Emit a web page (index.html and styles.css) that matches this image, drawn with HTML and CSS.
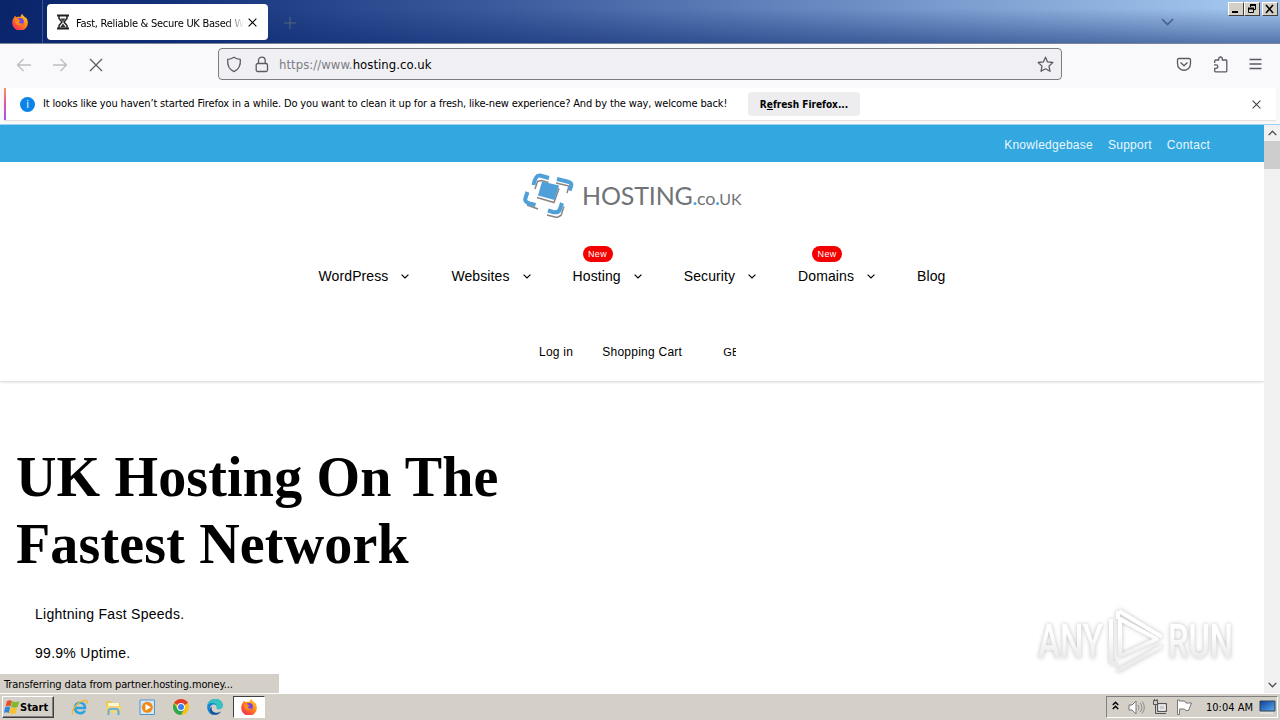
FILE: index.html
```html
<!DOCTYPE html>
<html lang="en">
<head>
  <meta charset="UTF-8" />
  <meta name="viewport" content="width=device-width, initial-scale=1.0"/>
  <title>Fast, Reliable &amp; Secure UK Based Web Hosting</title>
  <link rel="stylesheet" href="styles.css">
</head>
<body>

  <!-- Shared icons -->
  <svg width="0" height="0" class="defs">
    <defs>
      <linearGradient id="fox-body" x1="1" y1="0" x2="0.2" y2="1">
        <stop offset="0" stop-color="#ffe22e"/><stop offset=".45" stop-color="#ff8a16"/><stop offset="1" stop-color="#f5255a"/>
      </linearGradient>
      <linearGradient id="screen" x1="0" y1="0" x2="1" y2="1">
        <stop offset="0" stop-color="#0b3f9c"/><stop offset="1" stop-color="#58aaf0"/>
      </linearGradient>
    </defs>
    <symbol id="firefox" viewBox="0 0 16 16">
      <path d="M2.2 3.2 3 1.8l1.5 1.4C6 2.300 7.500 2.700 8.600 3 8.700 1.800 9.300.7 10.500 0c.3 1.700 2 2.500 3.200 4.200 0-.6-.2-1-.4-1.400 1.600 1.500 2.500 3.500 2.500 5.400A7.800 7.800 0 1 1 .3 8c0-2 .8-3.600 1.900-4.800z" fill="url(#fox-body)"/>
      <circle cx="8.300" cy="7.600" r="3.500" fill="#7543e5"/>
      <path d="M3 5.300c1.500-.8 3-.5 4 .7l1.500.5c-.3 1-1.200 1.200-1.700 1.600.3 1.500 2.500 2 4.200 1-1 2.500-4.700 3-6.700.8C3.300 8.700 3 7 3 5.300z" fill="#ff8b1c"/>
    </symbol>
    <symbol id="chevron" viewBox="0 0 8 5">
      <path d="M.6.600 4 4 7.400.6" fill="none" stroke="currentColor" stroke-width="1.200"/>
    </symbol>
    <symbol id="cross" viewBox="0 0 10 10">
      <path d="M.7.700l8.600 8.600M9.300.700.700 9.300" fill="none" stroke="currentColor" stroke-width="1.200"/>
    </symbol>
  </svg>

  <div class="tab-strip">
    <div class="fx-view"><svg width="16" height="16"><use href="#firefox"/></svg></div>
    <div class="tab">
      <svg width="14" height="16" viewBox="0 0 14 16">
        <path d="M1 1.500h12M1 14.500h12" stroke="#222" stroke-width="2"/>
        <path d="M3 2v2.500L6 8l-3 3.500V14M11 2v2.500L8 8l3 3.500V14" fill="none" stroke="#222" stroke-width="1.500"/>
        <path d="M4.500 4.500h5L7 7.500zM7 9.500l3 4H4z" fill="#333"/>
      </svg>
      <span class="tab-title">Fast, Reliable &amp; Secure UK Based W</span>
      <svg class="tab-close" width="9" height="9"><use href="#cross"/></svg>
    </div>
    <svg class="new-tab" width="12" height="12" viewBox="0 0 12 12"><path d="M6 0v12M0 6h12" stroke="#56657f"/></svg>
    <svg class="all-tabs" width="13" height="8" viewBox="0 0 13 8"><path d="M1 1l5.500 5.500L12 1" fill="none" stroke="#45618f" stroke-width="1.600"/></svg>
    <div class="win-buttons">
      <span class="win-btn"><svg width="12" height="10"><path d="M2 8h6" stroke="#000" stroke-width="2"/></svg></span>
      <span class="win-btn"><svg width="12" height="10"><path d="M4.500 3V1.500h5v4H8M2.500 4.500h5v4h-5z" fill="none" stroke="#000"/><path d="M4 1h6M2 4.500h6" stroke="#000" stroke-width="2"/></svg></span>
      <span class="win-btn close"><svg width="12" height="10"><path d="M2 1l7 8M9 1L2 9" stroke="#000" stroke-width="1.600"/></svg></span>
    </div>
  </div>

  <div class="toolbar">
    <div class="nav-buttons">
      <svg class="off" width="16" height="14" viewBox="0 0 16 14"><path d="M15 7H1.500M7.500 1l-6 6 6 6"/></svg>
      <svg class="off" width="16" height="14" viewBox="0 0 16 14"><path d="M1 7h13.500M8.500 1l6 6-6 6"/></svg>
      <svg class="stop" width="14" height="14" viewBox="0 0 14 14"><path d="M1 1l12 12M13 1L1 13"/></svg>
    </div>
    <div class="url-bar">
      <svg width="16" height="17" viewBox="0 0 16 17"><path d="M8 1.200c2 1.400 4 2 6.300 2.200C14.800 9 13 13.500 8 15.700 3 13.500 1.200 9 1.700 3.400 4 3.200 6 2.600 8 1.200z"/></svg>
      <svg class="lock" width="14" height="17" viewBox="0 0 14 17"><rect x="1.200" y="7.500" width="11.300" height="8" rx="1.500"/><path d="M3.500 7.500V4.500c0-4.400 6.700-4.400 6.700 0v3"/></svg>
      <span class="url"><span class="dim">https://www.</span>hosting.co.uk</span>
      <svg class="star" width="17" height="17" viewBox="0 0 17 17"><path d="M8.500 1.200l2.100 4.700 5.200.6-3.800 3.600 1 5.200-4.500-2.500L4 15.300l1-5.200L1.200 6.500l5.200-.6z"/></svg>
    </div>
    <div class="tools">
      <svg width="16" height="15" viewBox="0 0 16 15"><path d="M3 1.500h10c1 0 1.500.5 1.500 1.500v3.500c0 9-13 9-13 0V3c0-1 .5-1.500 1.500-1.500zM4.500 5.500 8 8.800l3.500-3.300"/></svg>
      <svg width="15" height="17" viewBox="0 0 15 17"><path d="M1.700 7V5c0-.7.300-1 1-1h3V3c0-2.700 3.600-2.700 3.600 0v1H13c.5 0 .8.3.8.800V15c0 .5-.3.800-.8.800H2.500c-.5 0-.8-.3-.8-.8v-2.700H3c2.500 0 2.500-3.500 0-3.500H1"/></svg>
      <svg width="13" height="12" viewBox="0 0 13 12"><path d="M.5 1.500h12M.5 6h12M.5 10.500h12"/></svg>
    </div>
  </div>

  <div class="notice-wrap">
    <div class="notice">
      <span class="info">i</span>
      <span class="notice-text">It looks like you haven’t started Firefox in a while. Do you want to clean it up for a fresh, like-new experience? And by the way, welcome back!</span>
      <button class="refresh"><span>R<u>e</u>fresh Firefox...</span></button>
      <svg class="notice-close" width="9" height="9"><use href="#cross"/></svg>
    </div>
  </div>

  <div class="viewport">
    <div class="page">
      <header>
        <div class="topbar">
          <a>Knowledgebase</a><a>Support</a><a>Contact</a>
        </div>
        <div class="logo">
          <svg width="52" height="46" viewBox="0 0 52 46">
            <g fill="none" stroke="#8a8583" stroke-width="1.500">
              <path d="M12 17l2.500-7.500 4-1 7 2M33 11l13 3-2 7M4 33l11 4M24 43l10 2.500 4-2 3-9"/>
              <path d="M14 25.500l17 5 5-14"/>
            </g>
            <path d="M19 9.500l17 4-4.500 14.500-16.500-4.500z" fill="#4f9fd9"/>
            <g fill="none" stroke="#4f9fd9" stroke-width="4">
              <path d="M10.500 13c1.500-8 3.500-10 6.500-9.500l9 2.500M34 7l10 2.500c4 1 5 2 4 5l-1.500 4M4.500 20l-2 6c-1 3 1 4.500 4 5.500l6 1.500M25 38.500l5 1.500c4 1 6 0 7-3l2-6"/>
            </g>
          </svg>
          <div class="logo-text">HOSTING<span class="small"><i>.</i>co<i>.</i><b>UK</b></span></div>
        </div>
        <nav class="main-nav">
          <a>WordPress<svg width="8" height="5"><use href="#chevron"/></svg></a>
          <a>Websites<svg width="8" height="5"><use href="#chevron"/></svg></a>
          <a><span class="badge">New</span>Hosting<svg width="8" height="5"><use href="#chevron"/></svg></a>
          <a>Security<svg width="8" height="5"><use href="#chevron"/></svg></a>
          <a><span class="badge">New</span>Domains<svg width="8" height="5"><use href="#chevron"/></svg></a>
          <a>Blog</a>
        </nav>
        <div class="account-nav">
          <a>Log in</a><a>Shopping Cart</a><span class="region">GB</span>
        </div>
      </header>

      <section class="hero">
        <h1>UK Hosting On The<br>Fastest Network</h1>
        <p>Lightning Fast Speeds.</p>
        <p>99.9% Uptime.</p>
      </section>
    </div>

    <div class="scrollbar">
      <span class="sb-btn"><svg class="up" width="9" height="6"><use href="#chevron"/></svg></span>
      <span class="thumb"></span>
      <span class="sb-btn end"><svg width="9" height="6"><use href="#chevron"/></svg></span>
    </div>

    <div class="status">Transferring data from partner.hosting.money...</div>

    <svg class="watermark" width="210" height="72" viewBox="0 0 210 72">
      <defs>
        <linearGradient id="fade" gradientUnits="userSpaceOnUse" x1="0" y1="16" x2="0" y2="60">
          <stop offset=".3" stop-color="#fff"/><stop offset=".8" stop-color="#ececec"/>
        </linearGradient>
      </defs>
      <g class="wm-text" fill="url(#fade)">
        <text x="8" y="53" textLength="65" lengthAdjust="spacingAndGlyphs">ANY</text>
        <text x="138" y="53" textLength="65" lengthAdjust="spacingAndGlyphs">RUN</text>
      </g>
      <g fill="none" stroke="url(#fade)" stroke-width="4" stroke-linejoin="round">
        <path d="M90 14v37l37-17z"/>
        <path d="M89 6l43 26M81 14v44M88 14v-8M87 66l45-25M87 58l-6 0"/>
      </g>
    </svg>
  </div>

  <div class="taskbar">
    <div class="start">
      <svg width="16" height="16" viewBox="0 0 16 16">
        <path d="M3 2c2-1 3-1 5 0L6.500 7.500c-2-1-3-1-5 0z" fill="#e8502a"/>
        <path d="M8.500 2.300c2 1 4 1 7 0L13.500 8c-2 1-4 1-6.500 0z" fill="#7fba2c"/>
        <path d="M1.200 8.300c2-1 3-1 5 0L4.800 14c-2-1-3-1-4.800 0z" fill="#2f86dc"/>
        <path d="M6.700 8.600c2 1 4 1 6.500 0l-1.500 5.700c-2 1-4 1-6.500 0z" fill="#fbc02d"/>
      </svg>
      <span>Start</span>
    </div>
    <div class="apps">
      <span class="app">
        <svg width="17" height="17" viewBox="0 0 17 17">
          <path d="M13.800 11.500c-2 4-9.800 3.500-9.800-2.800 0-6.700 10-6.700 10 .3H5" fill="none" stroke="#2ba3e0" stroke-width="2.600"/>
          <path d="M2 15.500C-1 12 8 1 15 1.500c2 .5 1 2.500.5 3.500" fill="none" stroke="#efb92f" stroke-width="1.300"/>
        </svg>
      </span>
      <span class="app">
        <svg width="17" height="17" viewBox="0 0 17 17">
          <path d="M1 2h5l1 2h8v10H1z" fill="#e9c75b"/><path d="M3 4h11v4H3z" fill="#fff6c9"/>
          <path d="M1 7h15v7H1z" fill="#f1d37a"/><path d="M3.500 16v-4c0-3 10-3 10 0v4" fill="none" stroke="#62b1dc" stroke-width="2.200"/>
        </svg>
      </span>
      <span class="app">
        <svg width="17" height="17" viewBox="0 0 17 17">
          <path d="M1 1h14.500v14.500H1z" fill="#d5e8f8" stroke="#4f96ce"/><circle cx="8.300" cy="8.300" r="5.500" fill="#f08a17"/><path d="M6.500 5l5.500 3.300-5.500 3.300z" fill="#fff"/>
        </svg>
      </span>
      <span class="app">
        <svg width="16" height="16" viewBox="0 0 16 16">
          <circle cx="8" cy="8" r="8" fill="#fbc116"/>
          <path d="M8 8 1.100 4A8 8 0 0 1 14.900 4z" fill="#e33b2e"/>
          <path d="M1.100 4A8 8 0 0 0 8 16l3.500-6L8 8 4.500 10z" fill="#2da94f"/>
          <circle cx="8" cy="8" r="3.900" fill="#fff"/><circle cx="8" cy="8" r="3" fill="#3f7fee"/>
        </svg>
      </span>
      <span class="app">
        <svg width="16" height="16" viewBox="0 0 16 16">
          <path d="M.2 8C0-2 15.500-2.500 15.800 6.500c0 3.500-4.500 4.500-6.300 3C11 7 8 4.500 5 6 1 8 3 15.500 9 15.800 4 17 .2 13 .2 8z" fill="#1784d2"/>
          <path d="M.5 6C2-1.500 15-2.500 15.800 6.500c0 3.500-4.500 4.500-6.300 3C11.500 4 4 2.500.5 6z" fill="#36c4c0"/>
          <path d="M5 7.500C3 12 8 16 14 12.500 11 18 2 16.500 3 10c.2-1 1-2 2-2.500z" fill="#12509e"/>
        </svg>
      </span>
      <span class="app active"><svg width="16" height="16"><use href="#firefox"/></svg></span>
    </div>
    <div class="tray">
      <svg class="expand" width="7" height="9" viewBox="0 0 7 9"><path d="M.8 4 3.500 1.300 6.200 4M.8 8l2.700-2.700L6.200 8" fill="none" stroke="#000" stroke-width="1.500"/></svg>
      <svg class="speaker" width="17" height="15" viewBox="0 0 17 15"><path d="M1 5h3l4-4v13l-4-4H1z" fill="#fff" stroke="#777"/><path d="M10 5c1.200 1.500 1.200 3.500 0 5M12 3c2.500 2.500 2.500 6.500 0 9M14 1.500c3 3.500 3 8.500 0 12" fill="none" stroke="#888"/></svg>
      <svg width="16" height="16" viewBox="0 0 16 16"><path d="M5.500 4.500h9v8h-9z" fill="#bbb" stroke="#555"/><path d="M7 6h6v5H7z" fill="#ccc" stroke="#fff"/><path d="M1.500 1.500h4v4h-4zM2.500 0v2M5 0v2M3.500 6v8.500H14" fill="none" stroke="#555"/></svg>
      <svg class="flag" width="16" height="16" viewBox="0 0 16 16"><path d="M1.500 1v14.500h2V10h5l1 1.500h3L15.500 4H10L8.500 2h-5V1z" fill="#fff" stroke="#777"/></svg>
      <span class="clock">10:04 AM</span>
      <svg width="17" height="14" viewBox="0 0 17 14"><path d="M1 1h15v10H1z" fill="url(#screen)" stroke="#345"/><path d="M1 13h13" stroke="#eee"/></svg>
    </div>
  </div>

</body>
</html>
```
FILE: styles.css
```css
* {
  box-sizing: border-box;
  margin: 0;
  padding: 0;
}

body {
  width: 1280px;
  height: 720px;
  overflow: hidden;
  display: flex;
  flex-direction: column;
  font-family: "DejaVu Sans Condensed", "DejaVu Sans", sans-serif;
  font-stretch: condensed;
  font-size: 11px;
  color: #000;
  background: #fff;
  white-space: nowrap;
}

svg {
  display: block;
  flex: none;
}

.defs {
  position: absolute;
}

/* browser chrome */
.tab-strip {
  height: 44px;
  flex: none;
  display: flex;
  align-items: flex-start;
  background: linear-gradient(rgba(10, 36, 106, 0) 20%, rgba(10, 40, 110, 0.5)), linear-gradient(90deg, #0a246a, #123078 12%, #3d5c9f 40%, #a0c4ec 96%);
  border-bottom: 1px solid #7b8499;
}

.fx-view {
  width: 43px;
  height: 43px;
  padding: 14px 0 0 12px;
  border-right: 1px solid #3d5592;
}

.tab {
  width: 221px;
  height: 36px;
  margin: 4px 0 0 4px;
  padding: 0 11px 0 9px;
  display: flex;
  align-items: center;
  background: #fff;
  border-radius: 4px;
}

.tab-title {
  width: 168px;
  margin-left: 6px;
  padding-top: 2px;
  letter-spacing: -0.25px;
  -webkit-mask-image: linear-gradient(90deg, #000 150px, transparent);
  mask-image: linear-gradient(90deg, #000 150px, transparent);
}

.tab-close {
  margin-left: 4px;
}

.new-tab {
  margin: 17px 0 0 16px;
}

.all-tabs {
  margin: 18px 54px 0 auto;
}

.win-buttons {
  display: flex;
  padding: 2px 2px 0 0;
}

.win-btn {
  width: 16px;
  height: 14px;
  padding: 1px;
  background: #d4d0c8;
  border: 1px solid;
  border-color: #fff #404040 #404040 #fff;
}

.win-btn.close {
  margin-left: 2px;
}

.toolbar {
  height: 44px;
  flex: none;
  display: flex;
  align-items: flex-start;
  padding-top: 4px;
  background: #f9f9fb;
}

.toolbar svg {
  fill: none;
  stroke: #5b5b66;
  stroke-width: 1.3;
  stroke-linejoin: round;
}

.nav-buttons {
  width: 218px;
  height: 32px;
  padding: 1px 0 0 16px;
  display: flex;
  align-items: center;
  gap: 20px;
}

.nav-buttons .off {
  stroke: #bcbcc2;
}

.stop {
  margin-left: 1px;
}

.url-bar {
  width: 844px;
  height: 32px;
  padding: 0 7px;
  display: flex;
  align-items: center;
  background: #f0f0f4;
  border: 1px solid #7c7c85;
  border-radius: 4px;
}

.lock {
  margin-left: 13px;
}

.url {
  margin-left: 10px;
  font-size: 13px;
  letter-spacing: 0.04px;
}

.dim {
  color: #7c7c84;
}

.star {
  margin-left: auto;
}

.tools {
  height: 32px;
  margin-left: 114px;
  display: flex;
  align-items: center;
  gap: 21px;
}

.notice-wrap {
  height: 37px;
  flex: none;
  padding: 0 4px;
  background: #f9f9fb;
  border-bottom: 1px solid #9bd5f3;
}

.notice {
  height: 32px;
  padding: 0 15px 0 14px;
  display: flex;
  align-items: center;
  background: #fff;
  border-left: 2px solid;
  border-image: linear-gradient(#ff9a5c, #e055a0, #9059ff) 1;
  box-shadow: 0 1px 1px #e8e0dc;
}

.info {
  width: 15px;
  height: 15px;
  border-radius: 50%;
  background: #0a84e8;
  color: #fff;
  text-align: center;
  line-height: 15px;
}

.notice-text {
  width: 690px;
  margin-left: 8px;
  padding-bottom: 1px;
  letter-spacing: -0.147px;
}

.refresh {
  width: 112px;
  height: 24px;
  margin-left: 15px;
  border: 0;
  border-radius: 4px;
  background: #ededf0;
  font: bold 10px "DejaVu Sans Condensed", sans-serif;
  font-stretch: condensed;
}

.notice-close {
  margin-left: auto;
  color: #444;
}

/* web page */
.viewport {
  height: 568px;
  flex: none;
  display: flex;
  position: relative;
  overflow: hidden;
}

.page {
  width: 1264px;
  font-family: "Liberation Sans", Arial, sans-serif;
}

header {
  height: 256px;
  box-shadow: 0 1px 3px rgba(0, 0, 0, 0.18);
}

.topbar {
  height: 37px;
  padding: 3px 54px 0 0;
  display: flex;
  align-items: center;
  justify-content: flex-end;
  gap: 15px;
  background: #33a7df;
  color: #e9f7ff;
  font-size: 12px;
  letter-spacing: 0.26px;
}

.logo {
  height: 68px;
  padding-top: 10px;
  display: flex;
  justify-content: center;
  gap: 7px;
}

.logo-text {
  width: 159px;
  padding-top: 8px;
  font: 25px/30px Lato, sans-serif;
  letter-spacing: -0.15px;
  color: #717376;
}

.logo-text .small {
  font-size: 18px;
}

.logo-text i {
  font-style: normal;
  font-weight: 700;
  color: #4f9fd9;
}

.logo-text b {
  font-size: 16px;
  font-weight: 400;
}

.main-nav {
  height: 92px;
  display: flex;
  align-items: center;
  justify-content: center;
  gap: 42px;
  font-size: 14px;
  letter-spacing: 0.1px;
}

.main-nav a {
  display: flex;
  align-items: center;
  gap: 13px;
  position: relative;
}

.badge {
  position: absolute;
  left: 10px;
  top: -22px;
  width: 30px;
  height: 16px;
  border-radius: 8px;
  background: #f40000;
  color: #fff;
  font-size: 9px;
  line-height: 17px;
  text-align: center;
  letter-spacing: 0.4px;
}

.main-nav a:nth-child(5) .badge {
  left: 14px;
}

.account-nav {
  height: 59px;
  padding: 1px 0 0 539px;
  display: flex;
  align-items: center;
  font-size: 12px;
  letter-spacing: 0.25px;
}

.account-nav a + a {
  margin-left: 29px;
}

.region {
  width: 13px;
  margin-left: 41px;
  overflow: hidden;
  font-size: 11px;
}

.hero {
  padding: 63px 0 0 16px;
}

h1 {
  font: bold 56px/67px "Liberation Serif", "Times New Roman", serif;
  letter-spacing: 0.16px;
  margin-bottom: 27px;
}

.hero p {
  padding-left: 19px;
  font-size: 14px;
  line-height: 19px;
  margin-bottom: 20px;
  letter-spacing: 0.28px;
}

.scrollbar {
  width: 16px;
  display: flex;
  flex-direction: column;
  background: #f0f0f0;
  color: #505050;
}

.sb-btn {
  height: 16px;
  display: flex;
  align-items: center;
  justify-content: center;
}

.up {
  transform: scaleY(-1);
}

.thumb {
  height: 28px;
  background: #cdcdcd;
}

.sb-btn.end {
  margin-top: auto;
}

.status {
  position: absolute;
  left: 0;
  bottom: 0;
  width: 279px;
  height: 19px;
  padding-left: 4px;
  line-height: 21px;
  letter-spacing: -0.11px;
  background: #d4d0c8;
}

.watermark {
  position: absolute;
  left: 1030px;
  top: 480px;
  filter: drop-shadow(0 0 2px rgba(0, 0, 0, 0.25));
}

.wm-text {
  font: 500 49px Roboto, sans-serif;
}

/* taskbar */
.taskbar {
  height: 27px;
  flex: none;
  display: flex;
  align-items: center;
  padding: 2px 2px 1px;
  background: #d4d0c8;
  box-shadow: inset 0 1px 0 #fff;
}

.start {
  width: 52px;
  height: 22px;
  display: flex;
  align-items: center;
  padding-left: 1px;
  font-weight: bold;
  border: 1px solid;
  border-color: #fff #404040 #404040 #fff;
  box-shadow: inset -1px -1px 0 #808080;
}

.apps {
  display: flex;
  margin-left: 9px;
  gap: 2px;
}

.app {
  width: 32px;
  height: 22px;
  display: flex;
  align-items: center;
  justify-content: center;
}

.app.active {
  background: #fff;
  border: 1px solid;
  border-color: #404040 #fff #fff #404040;
}

.tray {
  width: 172px;
  height: 22px;
  margin-left: auto;
  padding: 0 1px 0 5px;
  display: flex;
  align-items: center;
  border: 1px solid;
  border-color: #808080 #fff #fff #808080;
}

.expand {
  margin-bottom: 3px;
}

.speaker {
  margin: 0 7px 0 9px;
}

.flag {
  margin-left: 8px;
}

.clock {
  width: 47px;
  margin: 0 6px 0 auto;
}
```
